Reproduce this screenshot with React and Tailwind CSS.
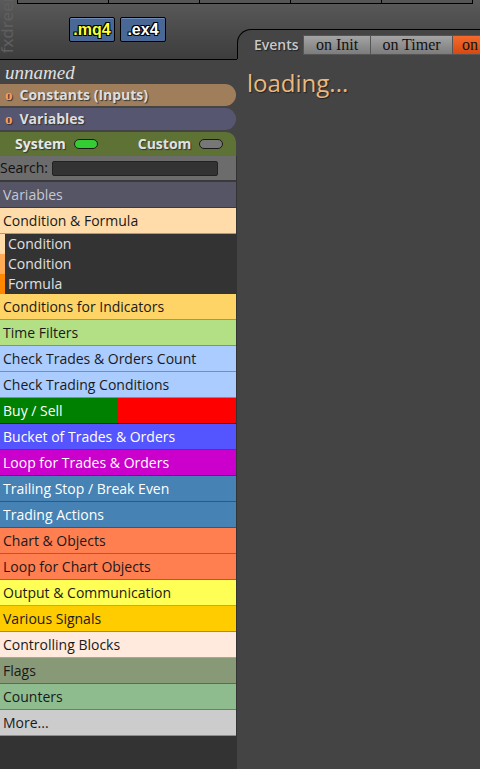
import React from "react";

const rows = [
  { t: "Conditions for Indicators", bg: "bg-[#ffd466]", c: "text-[#1a1a1a]" },
  { t: "Time Filters", bg: "bg-[#b3df85]", c: "text-[#1a1a1a]" },
  { t: "Check Trades & Orders Count", bg: "bg-[#aaccff]", c: "text-[#1a1a1a]" },
  { t: "Check Trading Conditions", bg: "bg-[#aaccff]", c: "text-[#1a1a1a]" },
  { t: "BUYSELL" },
  { t: "Bucket of Trades & Orders", bg: "bg-[#5555ff]", c: "text-white" },
  { t: "Loop for Trades & Orders", bg: "bg-[#cc00cc]", c: "text-white" },
  { t: "Trailing Stop / Break Even", bg: "bg-[#4682b4]", c: "text-white" },
  { t: "Trading Actions", bg: "bg-[#4682b4]", c: "text-white" },
  { t: "Chart & Objects", bg: "bg-[#ff7f50]", c: "text-[#1a1a1a]" },
  { t: "Loop for Chart Objects", bg: "bg-[#ff7f50]", c: "text-[#1a1a1a]" },
  { t: "Output & Communication", bg: "bg-[#ffff55]", c: "text-[#1a1a1a]" },
  { t: "Various Signals", bg: "bg-[#ffcc00]", c: "text-[#1a1a1a]" },
  { t: "Controlling Blocks", bg: "bg-[#ffeadd]", c: "text-[#1a1a1a]" },
  { t: "Flags", bg: "bg-[#889977]", c: "text-[#1a1a1a]" },
  { t: "Counters", bg: "bg-[#8fbc8f]", c: "text-[#1a1a1a]" },
  { t: "More...", bg: "bg-[#cccccc]", c: "text-[#1a1a1a]" },
];

export default function App() {
  return (
    <div className="relative w-[480px] h-[769px] overflow-hidden bg-[#444] flex flex-col font-['Open_Sans',sans-serif] text-[14px] leading-none">
      {/* header */}
      <div className="relative h-[59px] shrink-0 bg-gradient-to-b from-[#5a5a5a] to-[#3d3d3d]">
        <div className="absolute left-[-2px] bottom-[6px] [writing-mode:vertical-rl] rotate-180 text-[17px] text-[#5f5f5f] font-['Noto_Sans',sans-serif] leading-none">
          fxdreema
        </div>
        <div className="ml-[17px] w-[456px] h-[4px] flex border-b border-black">
          {[0, 1, 2, 3, 4].map((i) => (
            <div key={i} className="flex-1 border-l border-black last:border-r bg-[#555]" />
          ))}
        </div>
        <div className="flex gap-[5px] ml-[69px] mt-[13px]">
          <div className="w-[46px] h-[25px] flex items-center justify-center bg-[#4a6896] border border-black rounded-[2px] shadow-[inset_0_1px_0_#6f8bb8] font-bold text-[#ffff33] font-['Liberation_Sans',sans-serif] text-[16px] [text-shadow:1px_1px_0_#000,-1px_-1px_0_#000,1px_-1px_0_#000,-1px_1px_0_#000]">
            .mq4
          </div>
          <div className="w-[46px] h-[25px] flex items-center justify-center bg-[#4a6896] border border-black rounded-[2px] shadow-[inset_0_1px_0_#6f8bb8] font-bold text-white font-['Liberation_Sans',sans-serif] text-[16px] [text-shadow:1px_1px_0_#000,-1px_-1px_0_#000,1px_-1px_0_#000,-1px_1px_0_#000]">
            .ex4
          </div>
        </div>
      </div>

      <div className="flex flex-1 min-h-0">
        {/* sidebar */}
        <div className="w-[237px] shrink-0 flex flex-col border-t border-black">
          <div className="h-[24px] flex items-center pl-[5px] font-['Liberation_Serif',serif] italic text-[19px] text-[#e0e0e0]">
            unnamed
          </div>
          <div className="flex flex-col gap-[2px] w-[236px]">
            <div className="h-[22px] bg-[#a07e5b] rounded-r-[11px] flex items-center pl-[5px] gap-[7px] [text-shadow:1px_1px_1px_#333]">
              <span className="font-['Liberation_Serif',serif] font-bold text-[#ff9a55] text-[15px]">o</span>
              <span className="font-bold text-[#dedede]">Constants (Inputs)</span>
            </div>
            <div className="h-[22px] bg-[#565670] rounded-r-[11px] flex items-center pl-[5px] gap-[7px] [text-shadow:1px_1px_1px_#333]">
              <span className="font-['Liberation_Serif',serif] font-bold text-[#ff9a55] text-[15px]">o</span>
              <span className="font-bold text-[#dedede]">Variables</span>
            </div>
            <div className="h-[24px] bg-[#5e7236] rounded-tr-[10px] flex items-center pl-[15px] [text-shadow:1px_1px_1px_#333]">
              <span className="font-bold text-[#e8e8e8]">System</span>
              <span className="ml-[8px] w-[24px] h-[10px] rounded-full bg-[#33cc33] border border-[#1a1a1a]" />
              <span className="ml-[40px] font-bold text-[#e0e0e0]">Custom</span>
              <span className="ml-[8px] w-[24px] h-[10px] rounded-full bg-[#777] border border-[#1a1a1a]" />
            </div>
          </div>
          <div className="flex-1 bg-[#333] flex flex-col">
            <div className="h-[26px] w-[236px] bg-[#6c6c6c] border-b-2 border-[#3a3a3a] flex items-center gap-[4px]">
              <span className="text-[#111]">Search:</span>
              <div className="w-[166px] h-[15px] bg-[#333] border border-[#222] rounded-[2px]" />
            </div>
            <div className="w-[236px] flex flex-col">
              <div className="h-[26px] bg-[#555566] border-b border-black/30 flex items-center pl-[3px] text-[#c8c8d2]">Variables</div>
              <div className="h-[26px] bg-[#ffdcaa] border-b border-black/30 flex items-center pl-[3px] text-[#1a1a1a]">Condition &amp; Formula</div>
              <div className="bg-[#333] text-[#e0e0e0] flex flex-col">
                <div className="h-[20px] flex items-center"><span className="w-[5px] h-full bg-[#ffdcaa]" /><span className="pl-[3px]">Condition</span></div>
                <div className="h-[20px] flex items-center"><span className="w-[5px] h-full bg-[#ffaa55]" /><span className="pl-[3px]">Condition</span></div>
                <div className="h-[20px] flex items-center"><span className="w-[5px] h-full bg-[#ff8800]" /><span className="pl-[3px]">Formula</span></div>
              </div>
              {rows.map((r) =>
                r.t === "BUYSELL" ? (
                  <div key="bs" className="h-[26px] flex border-b border-black/30">
                    <div className="w-[117px] bg-[#008000] flex items-center pl-[3px] text-white">Buy / Sell</div>
                    <div className="flex-1 bg-[#ff0000]" />
                  </div>
                ) : (
                  <div key={r.t} className={`h-[26px] ${r.bg} ${r.c} border-b border-black/30 flex items-center pl-[3px]`}>
                    {r.t}
                  </div>
                )
              )}
            </div>
          </div>
        </div>

        {/* right panel */}
        <div className="flex-1 flex flex-col">
          <div className="relative z-10 -mt-[30px] h-[30px] rounded-tl-[14px] border-t border-l border-black bg-[#454545] flex items-center pl-[16px] pt-[1px] overflow-hidden">
            <span className="font-semibold text-[#c8c8c8] [text-shadow:1px_1px_1px_#222] w-[49px] shrink-0">Events</span>
            <div className="flex h-[20px] shrink-0">
              <div className="w-[68px] border border-[#555] bg-gradient-to-b from-[#a4a4a4] to-[#7c7c7c] flex items-center justify-center font-['Liberation_Serif',serif] text-[16px] text-[#111]">on Init</div>
              <div className="w-[82px] border border-[#555] border-l-0 bg-gradient-to-b from-[#a4a4a4] to-[#7c7c7c] flex items-center justify-center font-['Liberation_Serif',serif] text-[16px] text-[#111]">on Timer</div>
              <div className="w-[82px] border border-[#555] border-l-0 bg-gradient-to-b from-[#f56a2a] to-[#d64a12] flex items-center pl-[9px] font-['Liberation_Serif',serif] text-[16px] text-[#111]">on Tick</div>
            </div>
          </div>
          <div className="pl-[10px] pt-[12px] text-[24px] text-[#eab97e] [text-shadow:1px_1px_1px_#222]">
            loading...
          </div>
        </div>
      </div>
    </div>
  );
}
